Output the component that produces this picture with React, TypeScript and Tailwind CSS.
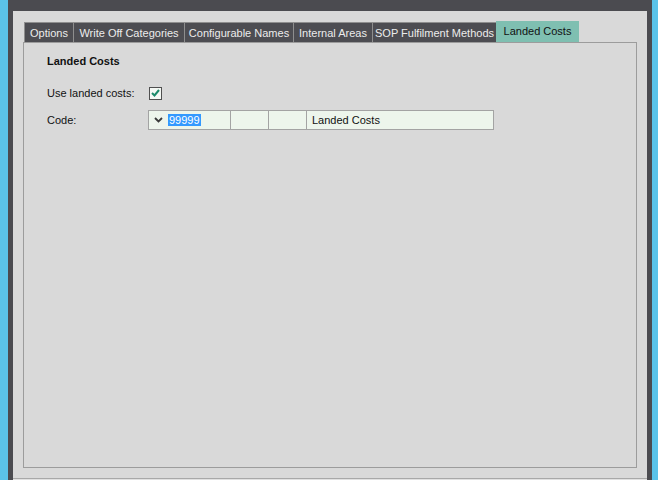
import React from "react";

const tabs = [
  { label: "Options", w: "w-[49px]" },
  { label: "Write Off Categories", w: "w-[111px]" },
  { label: "Configurable Names", w: "w-[109px]" },
  { label: "Internal Areas", w: "w-[79px]" },
  { label: "SOP Fulfilment Methods", w: "w-[124px]" },
];

function Chevron() {
  return (
    <svg width="9" height="6" viewBox="0 0 9 6" className="shrink-0">
      <path d="M1 1 L4.5 4.5 L8 1" fill="none" stroke="#3a3a3a" strokeWidth="1.8" />
    </svg>
  );
}

export default function App() {
  return (
    <div
      className="flex w-[658px] h-[480px] bg-[#5bc3e9] overflow-hidden text-[11px] text-[#111]"
      style={{ fontFamily: '"Liberation Sans", Arial, sans-serif' }}
    >
      <div className="w-[8px] shrink-0" />
      <div className="flex-1 flex flex-col bg-[#4b4b50] px-[5px] pt-[11px]">
        <div className="flex-1 flex flex-col bg-[#d9d9d9]">
          <div className="flex items-end h-[31px] pl-[11px]">
            {tabs.map((t) => (
              <div
                key={t.label}
                className={`${t.w} h-[20px] pt-px flex items-center justify-center bg-[#4d4d52] text-[#ececec] border-t border-l border-[#8e8e8e] box-border`}
              >
                {t.label}
              </div>
            ))}
            <div className="w-[83px] h-[21px] flex items-center justify-center bg-[#7fbfb1] text-[#111]">
              Landed Costs
            </div>
          </div>
          <div className="ml-[10px] w-[614px] h-[426px] border border-[#9c9c9c] pl-[23px] pt-[10px]">
            <div className="font-bold h-[16px] leading-[16px]">Landed Costs</div>
            <div className="flex items-center mt-[17px] h-[14px]">
              <div className="w-[102px]">Use landed costs:</div>
              <div className="w-[13px] h-[13px] border border-[#505050] bg-[#f4f8f4] flex items-center justify-center">
                <svg width="9" height="8" viewBox="0 0 9 8">
                  <path d="M1 4 L3.5 6.5 L8 1" fill="none" stroke="#1a8a6a" strokeWidth="2" />
                </svg>
              </div>
            </div>
            <div className="flex items-center mt-[10px]">
              <div className="w-[101px]">Code:</div>
              <div className="flex h-[20px] border border-[#a3a3a3] bg-[#a3a3a3] gap-px">
                <div className="w-[81px] bg-[#edf5ec] flex items-center pl-[5px] gap-[5px]">
                  <Chevron />
                  <span className="bg-[#3399ff] text-white leading-[12px] px-px">99999</span>
                </div>
                <div className="w-[37px] bg-[#edf5ec]" />
                <div className="w-[37px] bg-[#edf5ec]" />
                <div className="w-[186px] bg-[#edf5ec] flex items-center pl-[5px]">Landed Costs</div>
              </div>
            </div>
          </div>
          <div className="flex-1" />
          <div className="h-[2px] border-t border-[#a8a8a8] bg-[#e0e0e0]" />
        </div>
      </div>
      <div className="w-[6px] shrink-0" />
    </div>
  );
}
